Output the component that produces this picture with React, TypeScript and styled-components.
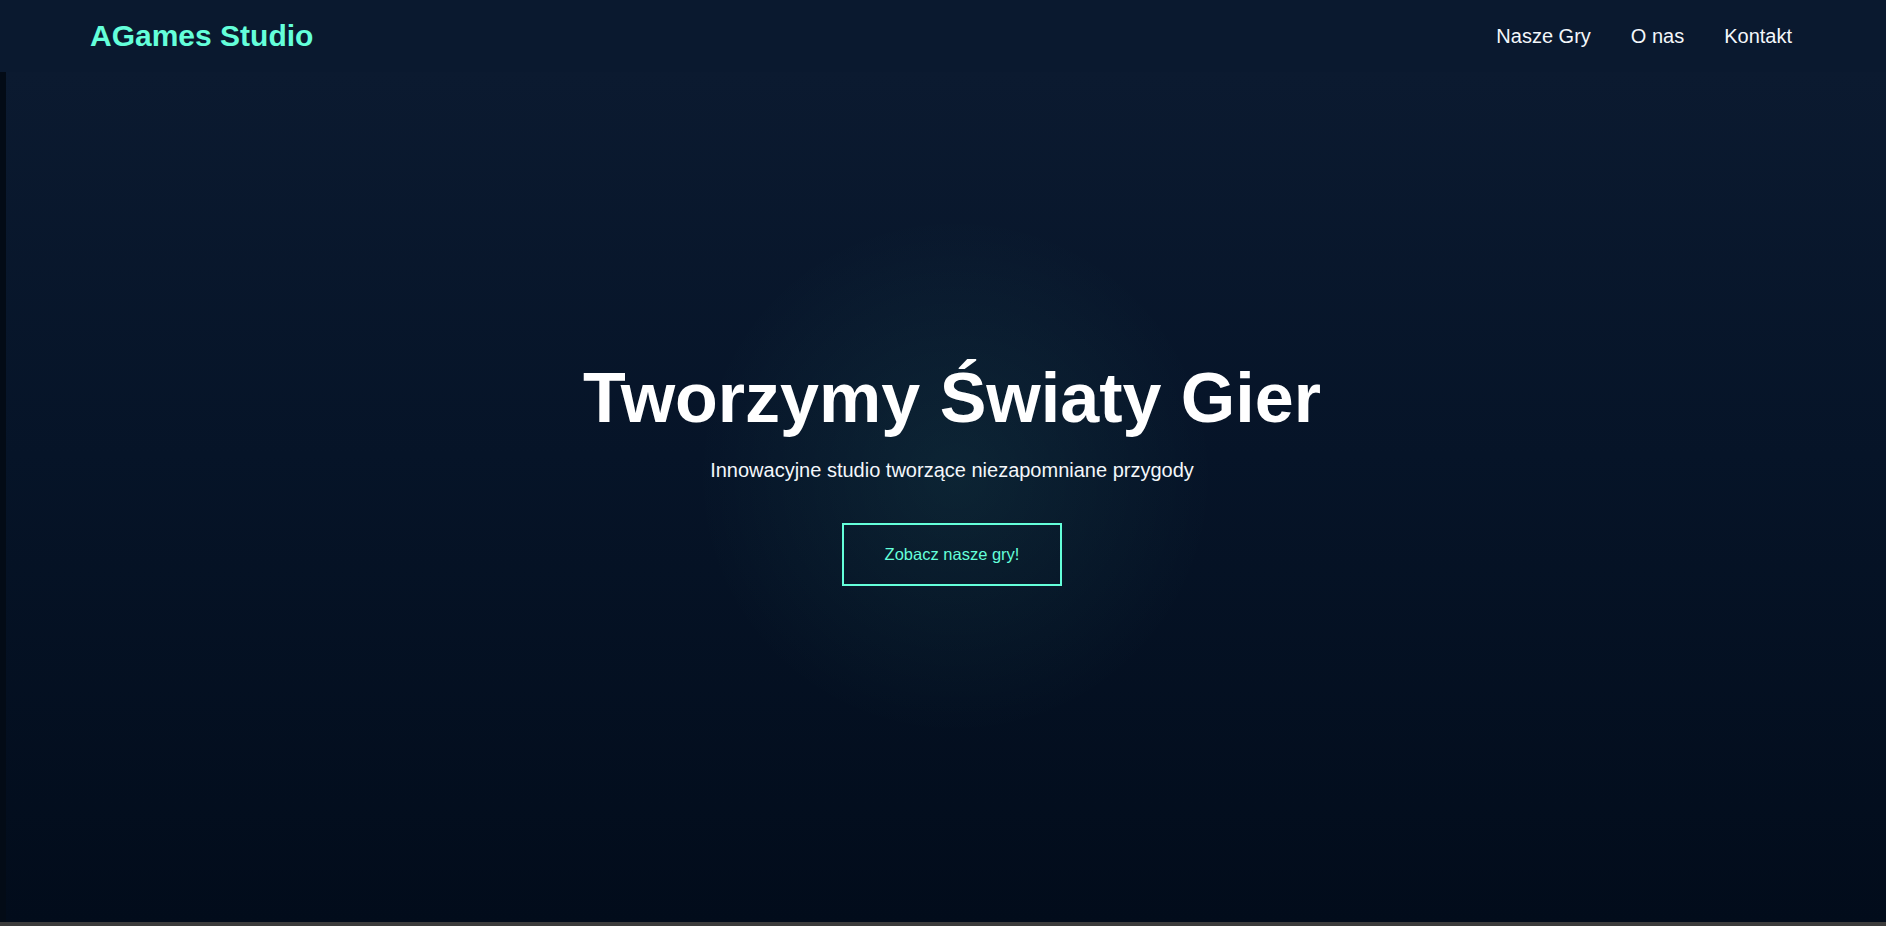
import React from "react";
import styled, { createGlobalStyle } from "styled-components";

const GlobalStyle = createGlobalStyle`
  * {
    box-sizing: border-box;
  }

  html, body {
    margin: 0;
    padding: 0;
    background-color: #020c1b;
    font-family: "Liberation Sans", Arial, sans-serif;
  }
`;

const Page = styled.div`
  display: flex;
  flex-direction: column;
  height: 100vh;
  overflow: hidden;
`;

const Header = styled.header`
  display: flex;
  align-items: center;
  justify-content: space-between;
  height: 72px;
  flex-shrink: 0;
  padding: 0 94px 0 90px;
  background-color: #0a192f;
`;

const Logo = styled.a`
  color: #64ffda;
  font-size: 30px;
  font-weight: 700;
  text-decoration: none;
`;

const Nav = styled.nav`
  display: flex;
  gap: 40px;
`;

const NavLink = styled.a`
  color: #f4f7fb;
  font-size: 20px;
  text-decoration: none;
`;

const Body = styled.div`
  display: flex;
  flex: 1;
`;

const Gutter = styled.div`
  width: 6px;
  background-color: #030b16;
`;

const Hero = styled.section`
  flex: 1;
  display: flex;
  flex-direction: column;
  align-items: center;
  justify-content: center;
  padding: 0 0 50px 12px;
  background:
    radial-gradient(circle 260px at 50.5% 47.5%, rgba(100, 255, 218, 0.07), rgba(100, 255, 218, 0) 100%),
    linear-gradient(to bottom, #0b1a30 0%, #061428 45%, #020c1b 100%);
`;

const Title = styled.h1`
  margin: 0 0 21px;
  color: #ffffff;
  font-size: 70px;
  font-weight: 700;
  line-height: 1.15;
`;

const Subtitle = styled.p`
  margin: 0 0 41px;
  color: #f4f7fb;
  font-size: 20px;
  line-height: 1.15;
`;

const CtaButton = styled.button`
  padding: 20px 41px;
  border: 2px solid #64ffda;
  background: transparent;
  color: #64ffda;
  font-family: "Liberation Sans", Arial, sans-serif;
  font-size: 16.5px;
  line-height: 1.15;
  cursor: pointer;
`;

const BottomBar = styled.div`
  height: 4px;
  flex-shrink: 0;
  background-color: #3c3c3c;
`;

const links = ["Nasze Gry", "O nas", "Kontakt"];

export default function App() {
  return (
    <Page>
      <GlobalStyle />
      <Header>
        <Logo href="#">AGames Studio</Logo>
        <Nav>
          {links.map((label) => (
            <NavLink key={label} href="#">
              {label}
            </NavLink>
          ))}
        </Nav>
      </Header>
      <Body>
        <Gutter />
        <Hero>
          <Title>Tworzymy Światy Gier</Title>
          <Subtitle>Innowacyjne studio tworzące niezapomniane przygody</Subtitle>
          <CtaButton>Zobacz nasze gry!</CtaButton>
        </Hero>
      </Body>
      <BottomBar />
    </Page>
  );
}
